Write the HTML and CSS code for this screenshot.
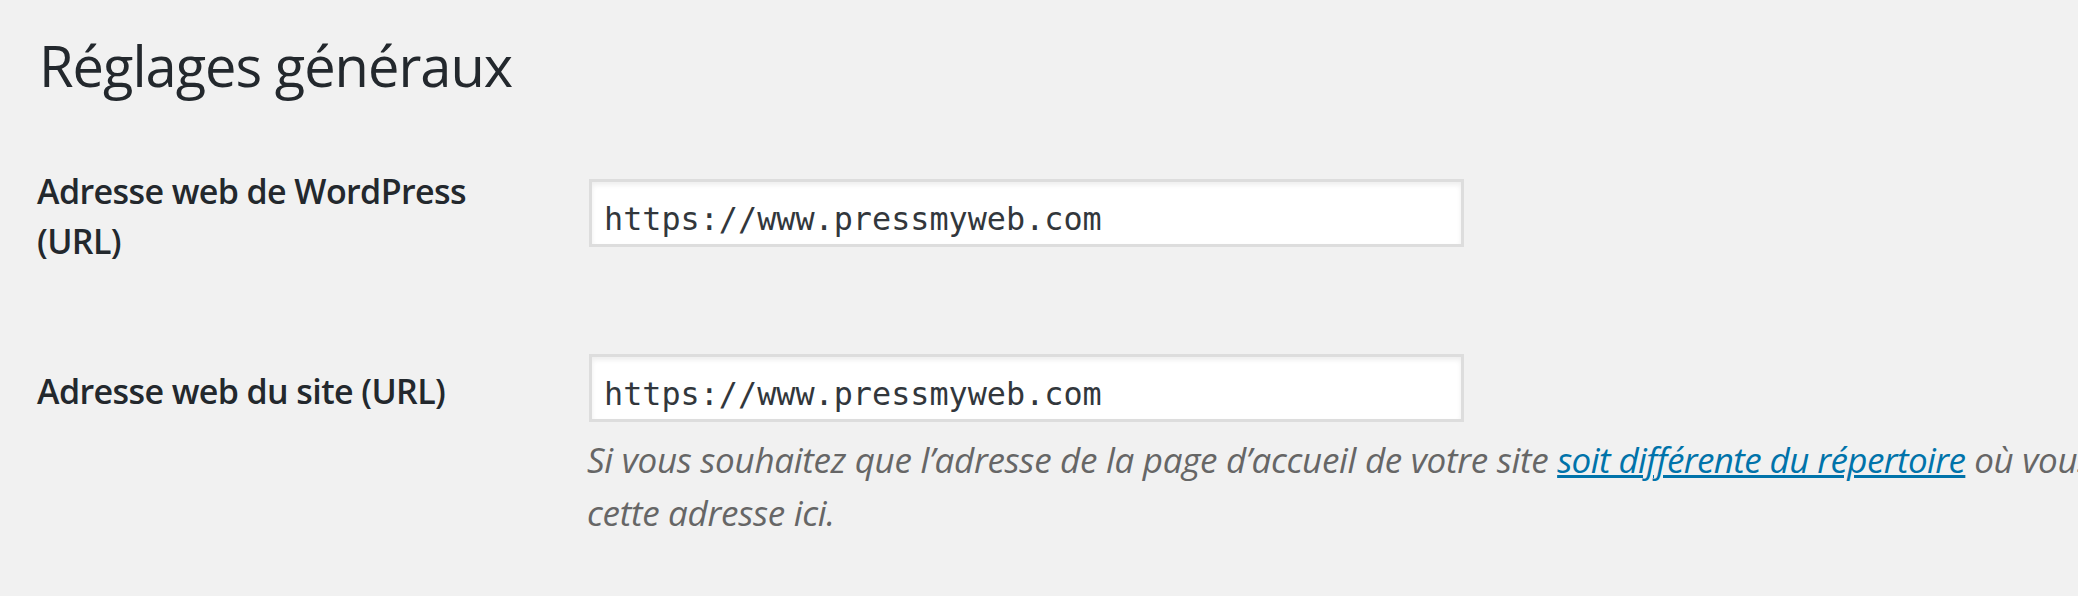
FILE: index.html
```html
<!DOCTYPE html>
<html lang="fr">
<head>
<meta charset="utf-8">
<title>Réglages généraux</title>
<link rel="stylesheet" href="styles.css">
</head>
<body>
<div class="wrap">
  <h1 class="page-title">Réglages généraux</h1>
  <div class="form-table">
    <div class="row row-first">
      <label class="row-label" for="siteurl">Adresse web de WordPress (URL)</label>
      <div class="row-field">
        <input class="regular-text" id="siteurl" type="url" value="https://www.pressmyweb.com" readonly>
      </div>
    </div>
    <div class="row row-second">
      <label class="row-label" for="home">Adresse web du site (URL)</label>
      <div class="row-field">
        <input class="regular-text" id="home" type="url" value="https://www.pressmyweb.com" readonly>
        <p class="description">Si vous souhaitez que l’adresse de la page d’accueil de votre site <a href="#">soit différente du répertoire</a> où vous avez installé WordPress, saisissez<br>cette adresse ici.</p>
      </div>
    </div>
  </div>
</div>
</body>
</html>
```

FILE: styles.css
```css
html, body {
  margin: 0;
  padding: 0;
  overflow: hidden;
  background: #f1f1f1;
}

body {
  font-family: "Open Sans", "Noto Sans", sans-serif;
  color: #23282d;
}

.wrap {
  padding: 0 0 0 37px;
}

.page-title {
  margin: 0 0 0 2px;
  padding-top: 28px;
  font-size: 56px;
  line-height: 75px;
  letter-spacing: -1px;
  font-weight: 400;
  color: #23282d;
}

.form-table {
  display: flex;
  flex-direction: column;
}

.row {
  display: grid;
  grid-template-columns: 552px 1fr;
  align-items: start;
}

.row-first {
  margin-top: 63px;
}

.row-second {
  margin-top: 88px;
}

.row-label {
  font-size: 34px;
  line-height: 50px;
  letter-spacing: -0.6px;
  font-weight: 600;
  color: #23282d;
  width: 470px;
}

.row-second .row-label {
  padding-top: 12px;
}

.row-field {
  display: flex;
  flex-direction: column;
  align-items: flex-start;
}

.row-first .row-field {
  padding-top: 13px;
}

.regular-text {
  box-sizing: border-box;
  width: 875px;
  height: 68px;
  margin: 0;
  padding: 10px 0 0 12px;
  border: 3px solid #dddddd;
  box-shadow: inset 0 3px 5px rgba(0, 0, 0, 0.07);
  background: #ffffff;
  font-family: "DejaVu Sans Mono", "Liberation Mono", monospace;
  font-size: 31.8px;
  color: #32373c;
  outline: none;
}

.description {
  margin: 12px 0 0 -2px;
  font-size: 35px;
  line-height: 52.5px;
  letter-spacing: -0.3px;
  font-style: italic;
  color: #666666;
  white-space: nowrap;
}

.description a {
  color: #0073aa;
  letter-spacing: -0.6px;
  text-decoration: underline;
  text-decoration-thickness: 3px;
}
```
